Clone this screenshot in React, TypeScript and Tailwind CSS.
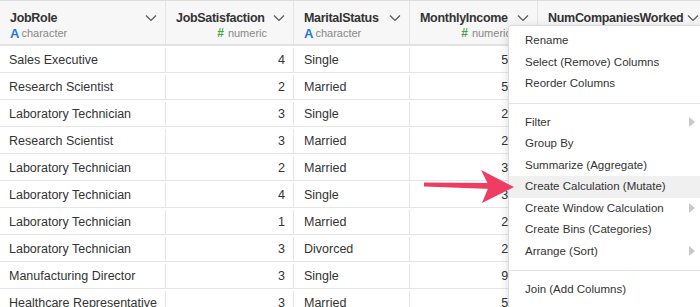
import React from 'react';

type Col = { name: string; type: 'character' | 'numeric'; width: string };

const columns: Col[] = [
  { name: 'JobRole', type: 'character', width: 'w-[166px]' },
  { name: 'JobSatisfaction', type: 'numeric', width: 'w-[128px]' },
  { name: 'MaritalStatus', type: 'character', width: 'w-[116px]' },
  { name: 'MonthlyIncome', type: 'numeric', width: 'w-[128px]' },
  { name: 'NumCompaniesWorked', type: 'numeric', width: 'w-[170px]' },
];

const rows: [string, number, string, number, number][] = [
  ['Sales Executive', 4, 'Single', 5993, 8],
  ['Research Scientist', 2, 'Married', 5130, 1],
  ['Laboratory Technician', 3, 'Single', 2090, 6],
  ['Research Scientist', 3, 'Married', 2909, 1],
  ['Laboratory Technician', 2, 'Married', 3468, 9],
  ['Laboratory Technician', 4, 'Single', 3068, 0],
  ['Laboratory Technician', 1, 'Married', 2670, 4],
  ['Laboratory Technician', 3, 'Divorced', 2693, 1],
  ['Manufacturing Director', 3, 'Single', 9526, 0],
  ['Healthcare Representative', 3, 'Married', 5237, 6],
];

const Chevron = () => (
  <svg width="12" height="8" viewBox="0 0 12 8" className="shrink-0">
    <path d="M1 1.5 L6 6.5 L11 1.5" fill="none" stroke="#555" strokeWidth="1.2" />
  </svg>
);

const Caret = () => (
  <svg width="6" height="10" viewBox="0 0 6 10">
    <path d="M0 0 L6 5 L0 10 Z" fill="#c8c8c8" />
  </svg>
);

const menuGroups: { label: string; sub?: boolean; active?: boolean }[][] = [
  [{ label: 'Rename' }, { label: 'Select (Remove) Columns' }, { label: 'Reorder Columns' }],
  [
    { label: 'Filter', sub: true },
    { label: 'Group By' },
    { label: 'Summarize (Aggregate)' },
    { label: 'Create Calculation (Mutate)', active: true },
    { label: 'Create Window Calculation', sub: true },
    { label: 'Create Bins (Categories)' },
    { label: 'Arrange (Sort)', sub: true },
  ],
  [{ label: 'Join (Add Columns)' }, { label: 'Nest Columns' }],
];

const App: React.FC = () => {
  return (
    <div className="relative w-[700px] h-[307px] overflow-hidden bg-white text-[#333] font-['Helvetica_Neue','Liberation_Sans',Arial,sans-serif]">
      <div className="flex flex-col">
        <div className="flex h-[46px] bg-[#f7f7f7] border-t border-t-[#dcdcdc] border-b-2 border-b-[#e2e2e2]">
          {columns.map((c) => (
            <div key={c.name} className={`${c.width} shrink-0 border-r border-[#e4e4e4] pl-2.5 pr-2 pt-[9px]`}>
              <div className="flex items-center justify-between gap-1">
                <span className="text-[12.5px] font-bold tracking-[-0.3px] leading-[16px] text-[#333] whitespace-nowrap">{c.name}</span>
                <Chevron />
              </div>
              {c.type === 'character' ? (
                <div className="flex items-center text-[11px] leading-[15px] text-[#888]">
                  <span className="text-[#1f7ad8] font-bold text-[13px] mr-[2px]">A</span>character
                </div>
              ) : (
                <div className="flex items-center justify-end pr-[18px] text-[11px] leading-[15px] text-[#888]">
                  <span className="text-[#46a64a] font-bold text-[12px] mr-1">#</span>numeric
                </div>
              )}
            </div>
          ))}
        </div>
        {rows.map((r, i) => (
          <div key={i} className="flex h-[27px] pt-[2px] border-b border-[#e6e6e6] text-[12.5px]">
            <div className="w-[166px] shrink-0 border-r border-[#e6e6e6] pl-[9px] flex items-center whitespace-nowrap">{r[0]}</div>
            <div className="w-[128px] shrink-0 border-r border-[#e6e6e6] pr-2 flex items-center justify-end">{r[1]}</div>
            <div className="w-[116px] shrink-0 border-r border-[#e6e6e6] pl-2.5 flex items-center">{r[2]}</div>
            <div className="w-[128px] shrink-0 border-r border-[#e6e6e6] pr-2 flex items-center justify-end">{r[3]}</div>
            <div className="w-[170px] shrink-0 pr-2 flex items-center justify-end">{r[4]}</div>
          </div>
        ))}
      </div>

      <div className="absolute left-[508px] top-[25px] w-[200px] bg-white border border-[#dcdcdc] rounded-[3px] shadow-[0_2px_10px_rgba(0,0,0,0.15)] pt-[4px]">
        {menuGroups.map((g, gi) => (
          <div key={gi}>
            {gi > 0 && <div className="h-px bg-[#e3e3e3] my-[8px]" />}
            {g.map((it) => (
              <div
                key={it.label}
                className={`h-[21.5px] flex items-center justify-between pl-[16px] pr-[12px] text-[11.5px] text-[#333] whitespace-nowrap ${it.active ? 'bg-[#f0f0f0]' : ''}`}
              >
                <span>{it.label}</span>
                {it.sub && <Caret />}
              </div>
            ))}
          </div>
        ))}
      </div>

      <svg className="absolute left-0 top-0 pointer-events-none" width="700" height="307">
        <path d="M424 182.5 L492 183 L492 189 L424 186.5 Z" fill="#ef3c62" />
        <path d="M481 170 L514 187 L482 203 L489 186 Z" fill="#ef3c62" />
      </svg>
    </div>
  );
};

export default App;
